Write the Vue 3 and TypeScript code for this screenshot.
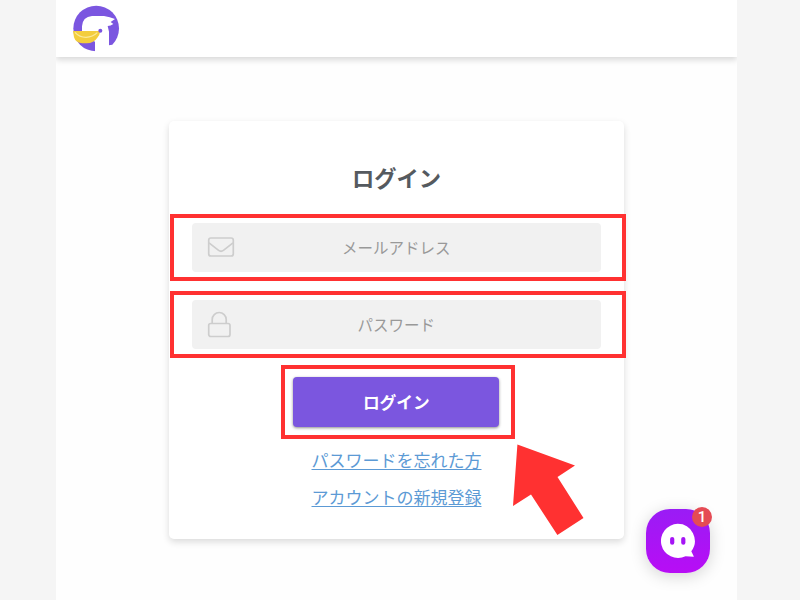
<script setup lang="ts">
import { ref } from 'vue'

const email = ref('')
const password = ref('')
const unread = ref(1)
</script>

<template>
  <div class="screen">
    <div class="page">
      <header class="header">
        <svg class="logo" viewBox="66 14 144 141" aria-hidden="true">
          <circle cx="138.5" cy="84.5" r="68.5" fill="#7b56e0" />
          <path d="M96 93V78Q98 49 126 47H162Q180 50 195 56L182 65L190 71Q182 77 173 77L177 94V135L187 133L180 157H135V124L120 116L96 108Z" fill="#fff" />
          <path d="M69 92H151Q149 105 142 112Q132 128 110 129H97Q77 128 72 111Z" fill="#f3cd3d" />
          <path d="M75 96Q88 111 108 111Q128 110 142 97" fill="none" stroke="#fae99a" stroke-width="3.5" />
          <circle cx="151" cy="91" r="6" fill="#7b56e0" />
        </svg>
      </header>

      <main class="card">
        <h1 class="title">ログイン</h1>
        <form class="form" @submit.prevent>
          <div class="mark">
            <label class="field">
              <svg class="icon" viewBox="0 0 28 28" aria-hidden="true">
                <rect x="1.7" y="5" width="24.6" height="18" rx="2.2" />
                <path d="M2 9.8L11.6 17.3Q14 19.2 16.4 17.3L26 9.8" />
              </svg>
              <input v-model="email" type="email" placeholder="メールアドレス" />
            </label>
          </div>
          <div class="mark">
            <label class="field">
              <svg class="icon" viewBox="0 0 28 28" aria-hidden="true">
                <rect x="1.7" y="13.5" width="21.3" height="13" rx="2" />
                <path d="M5.2 13.5V9.5A7 7 0 0 1 19.2 9.5V13.5" />
              </svg>
              <input v-model="password" type="password" placeholder="パスワード" />
            </label>
          </div>
          <div class="mark mark-button">
            <button class="submit" type="submit">ログイン</button>
          </div>
        </form>
        <nav class="links">
          <a href="#">パスワードを忘れた方</a>
          <a href="#">アカウントの新規登録</a>
        </nav>
      </main>
    </div>

    <svg class="arrow" viewBox="0 0 71 91" aria-hidden="true">
      <path d="M4.4 .6L62 21.5L44.5 33L70.5 74L44.4 91L18 50.5L0 62Z" fill="#ff3131" />
    </svg>

    <button class="chat" type="button" aria-label="チャット">
      <svg class="bubble" viewBox="0 0 36 36" aria-hidden="true">
        <path d="M17.7 .8A17.1 17.1 0 1 0 25.5 33.3L33.5 33.8Q34 33.8 33.7 33.2L31.3 28.2A17.1 17.1 0 0 0 17.7 .8Z" fill="#fff" />
        <rect x="10.1" y="14" width="4.2" height="7.8" rx="2.1" fill="#a515f5" />
        <rect x="21.2" y="14" width="4.2" height="7.8" rx="2.1" fill="#a515f5" />
      </svg>
      <span class="badge">{{ unread }}</span>
    </button>
  </div>
</template>

<style>
body {
  background: #f5f5f5;
}
</style>

<style scoped>
.screen {
  position: relative;
  box-sizing: border-box;
  width: 800px;
  height: 600px;
  padding: 0 63px 0 56px;
  overflow: hidden;
  background: #f5f5f5;
  font-family: "Noto Sans CJK JP", sans-serif;
}

.page {
  height: 600px;
  overflow: hidden;
  background: #fefefe;
}

.header {
  box-sizing: border-box;
  height: 57px;
  padding: 4.7px 0 0 16px;
  background: #fff;
  box-shadow: 0 3px 6px rgba(0, 0, 0, 0.15);
}

.logo {
  display: block;
  width: 48px;
  height: 47px;
}

.card {
  box-sizing: border-box;
  width: 455px;
  height: 418px;
  margin: 64px 0 0 113px;
  padding-top: 39px;
  border-radius: 5px;
  background: #fff;
  box-shadow: 0 3px 7px rgba(0, 0, 0, 0.14);
}

.title {
  margin: 0;
  color: #555a5f;
  font-size: 22.3px;
  font-weight: 700;
  line-height: 34px;
  text-align: center;
}

.form {
  display: flex;
  flex-direction: column;
  margin: 20px -2px 0 0.5px;
}

.mark {
  box-sizing: border-box;
  height: 67px;
  margin-bottom: 10px;
  padding: 4.5px 21px 4.5px 18px;
  border: 4px solid #ff3131;
}

.mark-button {
  align-self: center;
  width: 234px;
  height: 74px;
  margin: -3px 0 0;
  padding: 8px 9px;
}

.field {
  display: flex;
  position: relative;
  height: 49px;
}

.field input {
  width: 100%;
  padding: 0 0 1px;
  border: 0;
  border-radius: 4px;
  outline: 0;
  background: #f1f1f1;
  color: #555a5f;
  font: 15.5px "Noto Sans CJK JP", sans-serif;
  text-align: center;
}

.field input::placeholder {
  color: #999;
  opacity: 1;
}

.icon {
  position: absolute;
  top: 10.5px;
  left: 15.5px;
  width: 28px;
  height: 28px;
  fill: none;
  stroke: #cdcdcd;
  stroke-width: 1.7;
}

.submit {
  display: block;
  width: 206px;
  height: 50px;
  margin: 0 0 0 -0.5px;
  padding: 0;
  border: 0;
  border-radius: 4px;
  background: #7b56df;
  box-shadow: 0 1px 3px rgba(0, 0, 0, 0.45);
  color: #fff;
  font: 700 16.7px "Noto Sans CJK JP", sans-serif;
}

.links {
  display: flex;
  flex-direction: column;
  align-items: center;
  gap: 12px;
  margin-top: 8px;
}

.links a {
  color: #5c9ad5;
  font-size: 17px;
  line-height: 25px;
  text-decoration-thickness: 1px;
  text-underline-offset: 2px;
}

.arrow {
  position: absolute;
  top: 444px;
  left: 513px;
  width: 71px;
  height: 91px;
}

.chat {
  position: absolute;
  top: 509px;
  left: 646px;
  width: 64px;
  height: 64px;
  padding: 0;
  border: 0;
  border-radius: 24px;
  background: linear-gradient(#9a1cf5, #b80df5);
  box-shadow: 0 3px 16px rgba(0, 0, 0, 0.17);
}

.bubble {
  display: block;
  width: 36px;
  height: 36px;
  margin: 0 0 0 14px;
}

.badge {
  position: absolute;
  top: -2px;
  right: -2px;
  width: 20px;
  height: 20px;
  border-radius: 50%;
  background: #e54b55;
  color: #fff;
  font: 500 15px/20px Roboto, sans-serif;
  text-align: center;
}
</style>
